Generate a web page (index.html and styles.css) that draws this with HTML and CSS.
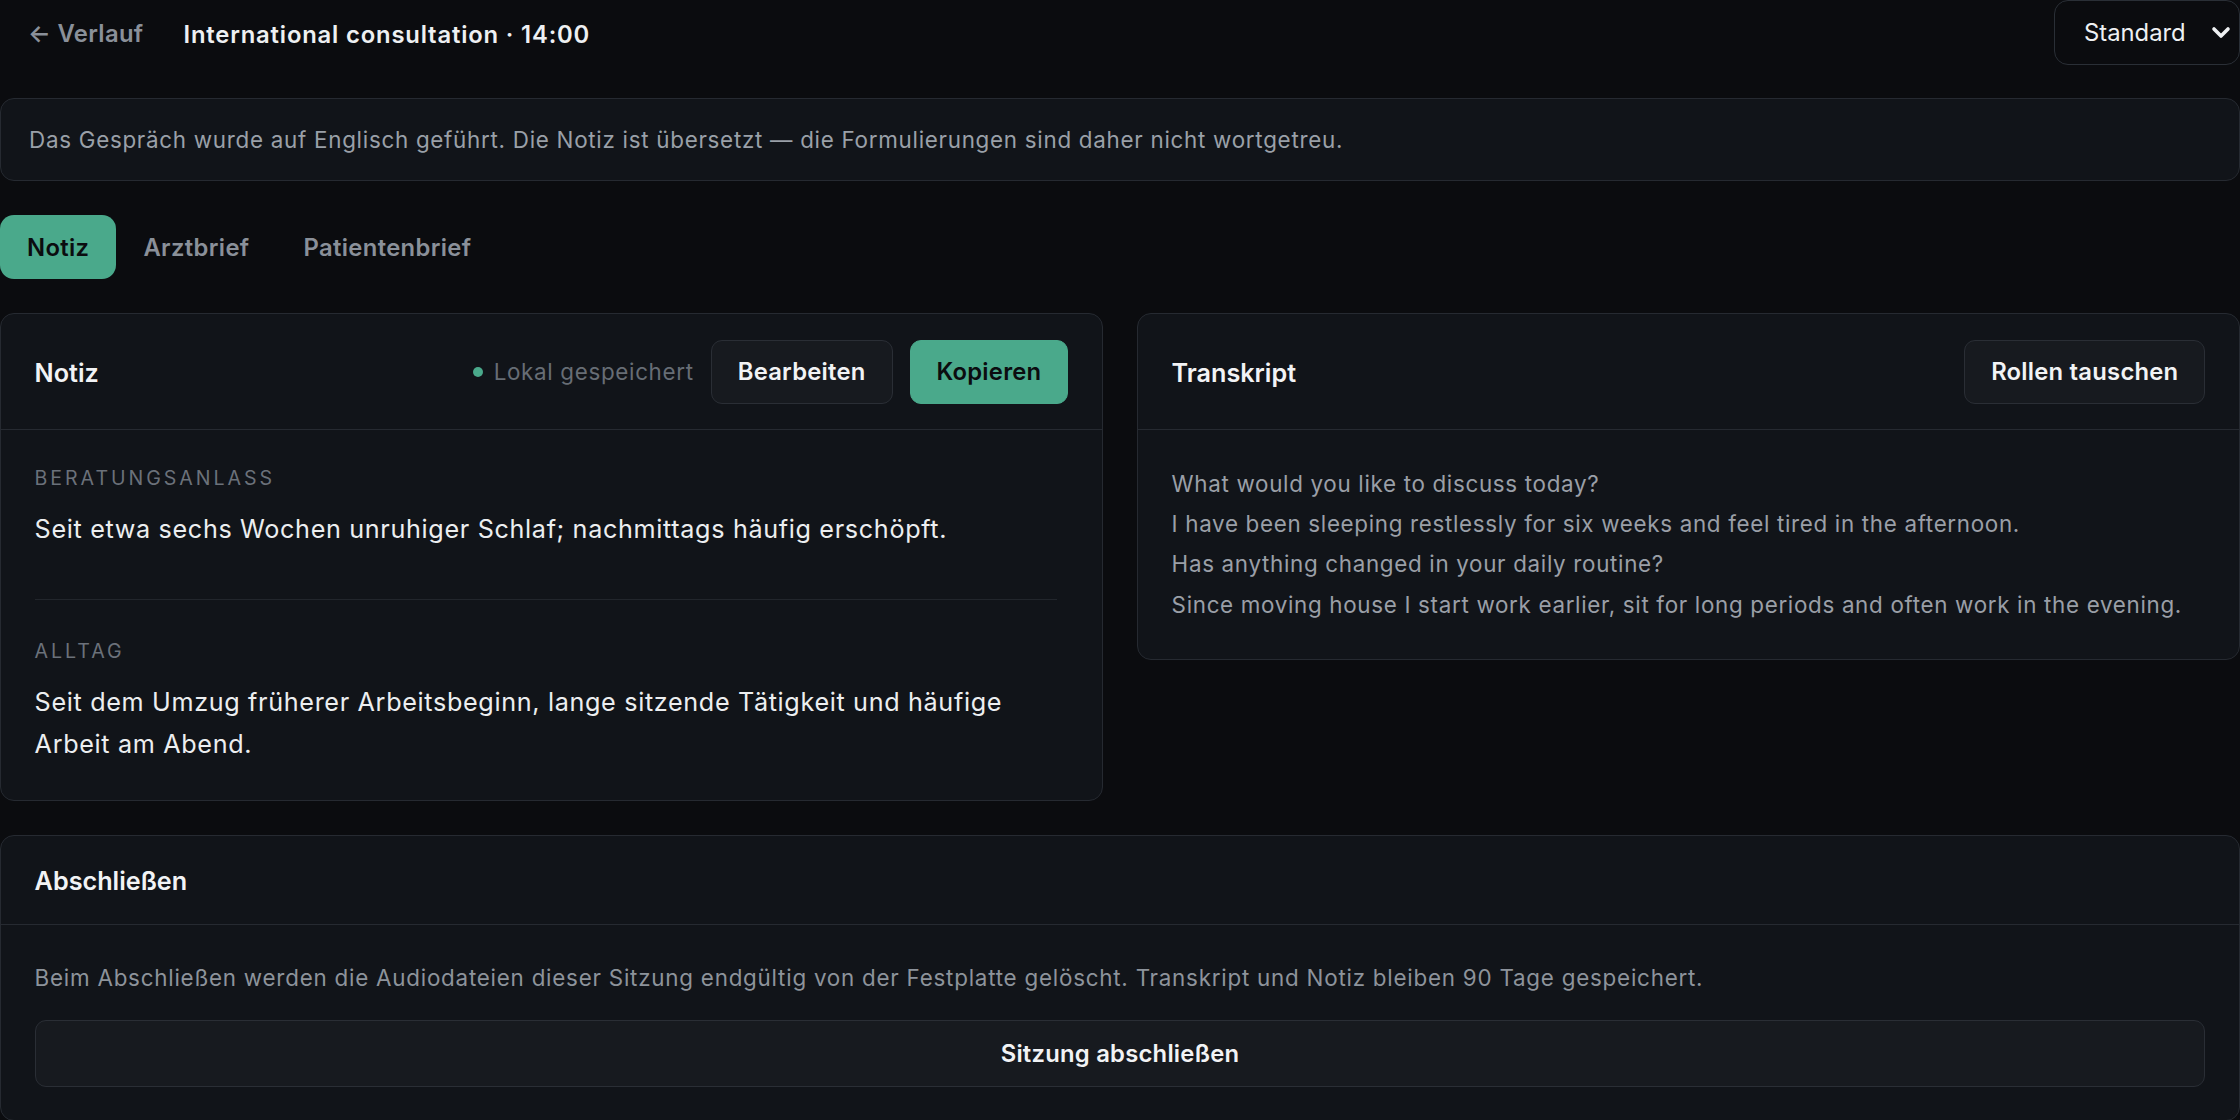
FILE: index.html
```html
<!DOCTYPE html>
<html lang="de">
<head>
    <meta charset="UTF-8">
    <meta name="viewport" content="width=device-width, initial-scale=1.0">
    <title>International consultation</title>
    <link rel="stylesheet" href="styles.css">
</head>
<body>
    <div class="page">
        <header class="topbar">
            <a href="#" class="back-link">← Verlauf</a>
            <h1 class="session-title">International consultation · 14:00</h1>
            <div class="mode-select">
                <span>Standard</span>
                <svg width="20" height="14" viewBox="0 0 20 14" aria-hidden="true">
                    <polyline points="3,3 10,10 17,3" fill="none" stroke="#eef0f2" stroke-width="3.6" stroke-linecap="round" stroke-linejoin="round"/>
                </svg>
            </div>
        </header>

        <div class="notice">
            Das Gespräch wurde auf Englisch geführt. Die Notiz ist übersetzt — die Formulierungen sind daher nicht wortgetreu.
        </div>

        <nav class="tabs">
            <button class="tab active">Notiz</button>
            <button class="tab">Arztbrief</button>
            <button class="tab">Patientenbrief</button>
        </nav>

        <div class="columns">
            <section class="card">
                <div class="card-header">
                    <h2>Notiz</h2>
                    <div class="actions">
                        <span class="saved"><span class="dot"></span>Lokal gespeichert</span>
                        <button class="btn">Bearbeiten</button>
                        <button class="btn btn-primary">Kopieren</button>
                    </div>
                </div>
                <div class="card-body note-body">
                    <div class="note-section">
                        <div class="note-label">Beratungsanlass</div>
                        <p class="note-text">Seit etwa sechs Wochen unruhiger Schlaf; nachmittags häufig erschöpft.</p>
                    </div>
                    <div class="note-section">
                        <div class="note-label">Alltag</div>
                        <p class="note-text">Seit dem Umzug früherer Arbeitsbeginn, lange sitzende Tätigkeit und häufige Arbeit am Abend.</p>
                    </div>
                </div>
            </section>

            <section class="card">
                <div class="card-header">
                    <h2>Transkript</h2>
                    <button class="btn">Rollen tauschen</button>
                </div>
                <div class="card-body transcript">
                    <p>What would you like to discuss today?</p>
                    <p>I have been sleeping restlessly for six weeks and feel tired in the afternoon.</p>
                    <p>Has anything changed in your daily routine?</p>
                    <p>Since moving house I start work earlier, sit for long periods and often work in the evening.</p>
                </div>
            </section>
        </div>

        <section class="card">
            <div class="card-header">
                <h2>Abschließen</h2>
            </div>
            <div class="card-body">
                <p class="close-info">Beim Abschließen werden die Audiodateien dieser Sitzung endgültig von der Festplatte gelöscht. Transkript und Notiz bleiben 90 Tage gespeichert.</p>
                <button class="btn btn-wide">Sitzung abschließen</button>
            </div>
        </section>
    </div>
</body>
</html>
```

FILE: styles.css
```css
body {
    margin: 0;
    background-color: #0b0c0f;
    color: #eceef0;
    font-family: Inter, "Noto Sans", sans-serif;
}

.page {
    width: 2240px;
}

/* top bar */
.topbar {
    display: flex;
    align-items: center;
    gap: 12px;
    height: 65px;
    margin-bottom: 33px;
}

.back-link {
    display: flex;
    align-items: center;
    height: 64px;
    padding: 2px 28px 0;
    color: #8a9099;
    font-size: 23.8px;
    font-weight: 600;
    letter-spacing: 0.015em;
    text-decoration: none;
}

.session-title {
    margin: 0;
    padding-top: 3px;
    font-size: 23.8px;
    font-weight: 600;
    letter-spacing: 0.035em;
    color: #eef0f2;
}

.mode-select {
    margin-left: auto;
    display: flex;
    align-items: center;
    justify-content: space-between;
    box-sizing: border-box;
    width: 186px;
    height: 65px;
    padding: 0 8px 0 29px;
    border: 1px solid #2a2f36;
    border-radius: 14px;
    font-size: 23.8px;
    color: #eef0f2;
}

/* translation notice */
.notice {
    margin-bottom: 34px;
    padding: 25px 28px;
    background-color: #111419;
    border: 1px solid #262a31;
    border-radius: 14px;
    color: #9aa0a8;
    font-size: 22.4px;
    line-height: 1.4;
    letter-spacing: 0.032em;
}

/* tabs */
.tabs {
    display: flex;
    margin-bottom: 34px;
}

.tab {
    height: 64px;
    padding: 0 26px;
    border: 1px solid transparent;
    border-radius: 14px;
    background: none;
    color: #8a9099;
    font-family: inherit;
    font-size: 23.8px;
    font-weight: 600;
    letter-spacing: 0.015em;
    cursor: pointer;
}

.tab.active {
    background-color: #4aa98b;
    color: #0b0c0f;
}

/* cards */
.columns {
    display: grid;
    grid-template-columns: 1fr 1fr;
    gap: 34px;
    align-items: start;
    margin-bottom: 34px;
}

.card {
    background-color: #111419;
    border: 1px solid #262a31;
    border-radius: 14px;
}

.card-header {
    display: flex;
    align-items: center;
    justify-content: space-between;
    padding: 25.2px 33.6px;
    border-bottom: 1px solid #262a31;
}

.card-header h2 {
    margin: 0;
    padding-top: 3px;
    font-size: 25.2px;
    font-weight: 600;
    line-height: 34.8px;
    color: #f2f3f5;
}

.card-body {
    padding: 33.6px;
}

.actions {
    display: flex;
    align-items: center;
    gap: 17px;
}

.saved {
    display: flex;
    align-items: center;
    gap: 11px;
    color: #676d75;
    font-size: 22.4px;
    letter-spacing: 0.03em;
}

.dot {
    width: 10px;
    height: 10px;
    border-radius: 50%;
    background-color: #4aa98b;
}

.btn {
    height: 64.4px;
    padding: 0 26px;
    background-color: #171a1f;
    border: 1px solid #2a2e35;
    border-radius: 11px;
    color: #f2f3f5;
    font-family: inherit;
    font-size: 23.8px;
    font-weight: 600;
    letter-spacing: 0.01em;
    cursor: pointer;
}

.btn-primary {
    background-color: #4aa98b;
    border-color: #4aa98b;
    color: #0b0c0f;
}

.btn-wide {
    display: block;
    width: 100%;
    height: 67.2px;
}

/* note */
.note-body {
    padding-right: 44.8px;
}

.note-section + .note-section {
    margin-top: 48px;
    padding-top: 37px;
    border-top: 1px solid #22262c;
}

.note-label {
    margin-bottom: 16px;
    color: #6b717a;
    font-size: 19.6px;
    line-height: 28px;
    letter-spacing: 0.15em;
    text-transform: uppercase;
}

.note-text {
    margin: 0;
    font-size: 25.2px;
    line-height: 1.7;
    letter-spacing: 0.026em;
    color: #eceef0;
}

/* transcript */
.transcript p {
    margin: 0;
    color: #9a9fa7;
    font-size: 22.4px;
    line-height: 1.8;
    letter-spacing: 0.03em;
}

.close-info {
    margin: 0 0 23px;
    color: #8d939b;
    font-size: 22.4px;
    line-height: 1.7;
    letter-spacing: 0.034em;
}
```
